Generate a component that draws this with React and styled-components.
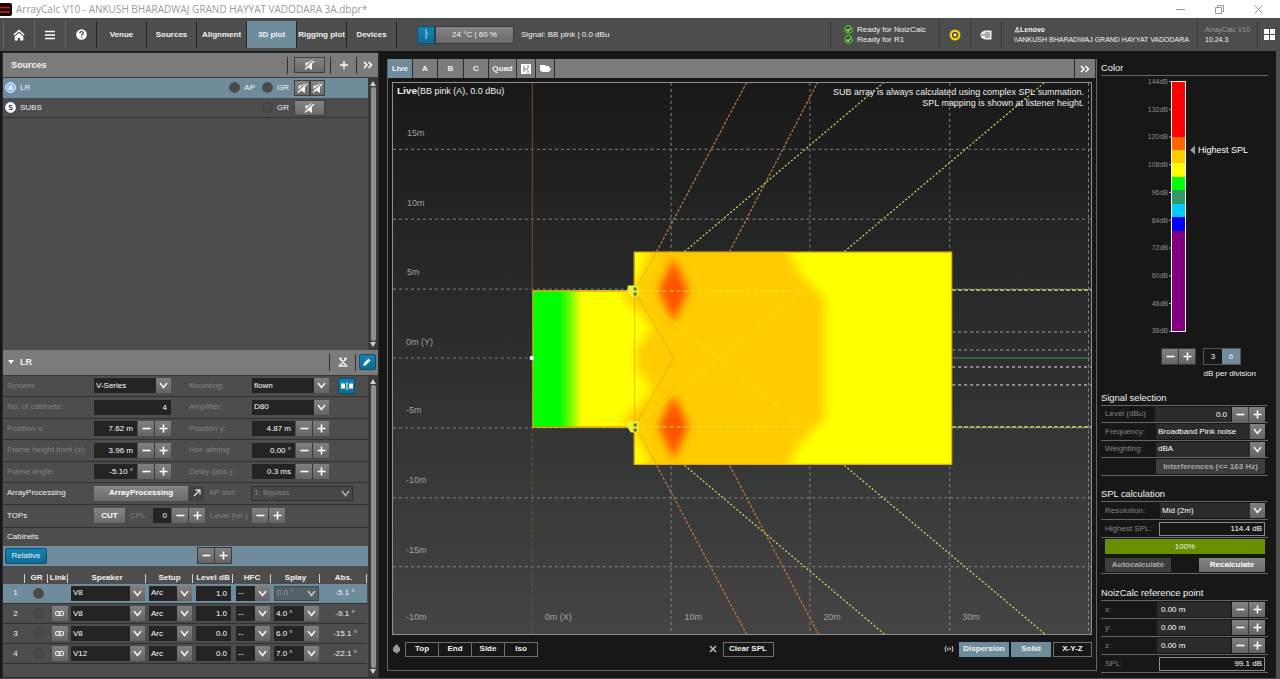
import React from "react";
import styled, { createGlobalStyle, css } from "styled-components";

const steel = "#6f8c9c";
const raised = "linear-gradient(#858585, #6a6a6a)";
const accent = "linear-gradient(#1183b4, #0f6c98)";

const GlobalStyle = createGlobalStyle`
  *, *::before, *::after { box-sizing: border-box; }
  html, body { margin: 0; background: #171717; }
  body, button, input, select, table {
    font-family: "Liberation Sans", Arial, sans-serif;
    font-size: 8px;
    line-height: 10px;
    color: #f2f2f2;
  }
  button, input, select { margin: 0; padding: 0; border: 0; border-radius: 0; }
  svg { display: block; flex: none; }
  h2, h3, p { margin: 0; font-weight: normal; }
`;

/* ---------- shell ---------- */
const Page = styled.div`
  display: flex;
  flex-direction: column;
  min-height: 100vh;
`;
const TitleBar = styled.header`
  display: flex;
  align-items: center;
  height: 18px;
  padding-right: 2px;
  background: #fff;
  color: #9a9a9a;
  font: 10px/16px "Open Sans", sans-serif;
`;
const TitleText = styled.span`
  flex: 1;
  padding-left: 4px;
  white-space: nowrap;
`;
const WindowButton = styled.button`
  display: grid;
  place-items: center;
  width: 39px;
  height: 16px;
  background: none;
`;
const Toolbar = styled.nav`
  display: flex;
  align-items: stretch;
  height: 33px;
  padding: 3px 0 3px 3px;
  background: #4d4d4d;
`;
const ToolIcon = styled.button`
  display: grid;
  place-items: center;
  width: 31px;
  background: none;
  border-left: 1px solid #696969;
`;
const NavButton = styled.button`
  width: 50px;
  border-left: 1px solid #242424;
  background: ${(p) => (p.$active ? steel : "none")};
  font-weight: bold;
  white-space: nowrap;
`;
const Climate = styled.div`
  display: flex;
  align-items: center;
  flex: 1;
  border-left: 1px solid #242424;
  padding-left: 20px;
`;
const ClimateIcon = styled.button`
  display: grid;
  place-items: center;
  width: 18px;
  height: 18px;
  background: ${accent};
  border: 1px solid #24485a;
`;
const ClimateButton = styled.button`
  width: 79px;
  height: 18px;
  margin-right: 7px;
  background: ${raised};
  border: 1px solid #383838;
`;
const StatusCell = styled.div`
  display: flex;
  flex-direction: column;
  justify-content: center;
  width: ${(p) => p.$w}px;
  padding-left: ${(p) => p.$pad || 0}px;
  border-left: 1px solid #383838;
  white-space: nowrap;
  ${(p) => p.$center && css`align-items: center;`}
  ${(p) => p.$tiny && css`font-size: 7px;`}
`;
const StatusLine = styled.span`
  display: flex;
  align-items: center;
  gap: 4px;
`;
const Dim = styled.span`color: #9a9a9a;`;
const Body = styled.main`
  display: flex;
  flex: 1;
  padding: 1px 4px 0 2px;
  background: #171717;
  border-right: 4px solid #505050;
  border-bottom: 1px solid #505050;
`;

/* ---------- shared controls ---------- */
const Field = styled.input`
  width: ${(p) => p.$w}px;
  height: 15px;
  min-width: 0;
  padding: 0 4px;
  background: #242424;
  color: #fff;
  text-align: ${(p) => (p.$left ? "left" : "right")};
  ${(p) => p.$outlined && css`
    height: 14px;
    background: #171717;
    border: 1px solid #8a8a8a;
    padding: 0 2px;
  `}
`;
const Square = styled.button`
  display: grid;
  place-items: center;
  width: 16px;
  height: 15px;
  background: linear-gradient(#808080, #646464);
`;
const Steps = styled.span`
  display: inline-flex;
  gap: 1px;
  padding: ${(p) => (p.$framed ? "1px" : 0)};
  background: #3a3a3a;
`;
const StepperBox = styled.span`
  display: flex;
  gap: 1px;
`;
const SelectBox = styled.span`
  position: relative;
  display: block;
  width: ${(p) => p.$w}px;
  opacity: ${(p) => (p.$off ? 0.6 : 1)};
  select {
    appearance: none;
    display: block;
    width: 100%;
    height: 15px;
    padding: 0 16px 0 2px;
    background: ${(p) => (p.$off ? "#444" : p.$soft ? "#2b2b2b" : "#242424")};
    border: ${(p) => (p.$off ? "1px solid #1c1c1c" : 0)};
    color: ${(p) => (p.$off ? "#aaa" : "#fff")};
    opacity: 1;
  }
`;
const Chevron = styled.span`
  position: absolute;
  top: 0;
  right: 0;
  display: grid;
  place-items: center;
  width: 15px;
  height: 15px;
  pointer-events: none;
  background: ${(p) => (p.$off ? "none" : "linear-gradient(#808080, #646464)")};
`;
const PushButton = styled.button`
  width: ${(p) => p.$w}px;
  height: ${(p) => p.$h || 15}px;
  background: ${(p) => (p.$flat ? "#3d3d3d" : raised)};
  color: ${(p) => (p.$flat ? "#a9a9a9" : "#fff")};
  font-weight: bold;
  white-space: nowrap;
`;
const BlueButton = styled.button`
  display: grid;
  place-items: center;
  width: ${(p) => p.$w}px;
  height: 16px;
  background: ${accent};
  border: 1px solid #124e6c;
  border-radius: 2px;
`;

const PlusMinus = ({ framed, label }) => (
  <Steps $framed={framed}>
    <Square aria-label={`Decrease ${label}`}>
      <svg width="9" height="9"><path d="M0.500 4.500h8" stroke="#fff" strokeWidth="1.600" /></svg>
    </Square>
    <Square aria-label={`Increase ${label}`}>
      <svg width="9" height="9"><path d="M0.500 4.500h8M4.500 0.500v8" stroke="#fff" strokeWidth="1.600" /></svg>
    </Square>
  </Steps>
);
const Stepper = ({ id, value, w = 43, label, left }) => (
  <StepperBox>
    <Field id={id} aria-label={label} $w={w} $left={left} defaultValue={value} />
    <PlusMinus label={label} />
  </StepperBox>
);
const Select = ({ id, value, w, off, label, soft }) => (
  <SelectBox $w={w} $off={off} $soft={soft}>
    <select id={id} aria-label={label} disabled={off} defaultValue={value}>
      <option>{value}</option>
    </select>
    <Chevron $off={off}>
      <svg width="9" height="7"><path d="M1 1l3.500 4.500L8 1" fill="none" stroke="#f4f4f4" strokeWidth="1.500" /></svg>
    </Chevron>
  </SelectBox>
);

/* ---------- left column ---------- */
const LeftPanel = styled.section`
  display: flex;
  flex-direction: column;
  flex: none;
  width: 377px;
  background: #4d4d4d;
  border: 1px solid #2a2a2a;
`;
const PanelHead = styled.div`
  display: flex;
  align-items: center;
  gap: 6px;
  height: ${(p) => p.$h}px;
  padding-left: ${(p) => p.$pad}px;
  background: #7b7b7b;
  border-bottom: 1px solid #3a3a3a;
  h2 { flex: 1; font-size: 9px; font-weight: bold; }
`;
const HeadTools = styled.span`display: flex;`;
const HeadTool = styled.span`
  display: grid;
  place-items: center;
  width: ${(p) => p.$w}px;
  height: 17px;
  border-left: 1px solid #2f2f2f;
`;
const BareButton = styled.button`
  display: grid;
  place-items: center;
  width: 16px;
  height: 16px;
  background: none;
`;
const MuteButton = styled.button`
  display: grid;
  place-items: center;
  width: ${(p) => p.$w}px;
  height: 16px;
  background: ${raised};
  border: 1px solid #404040;
`;
const Scrollable = styled.div`
  display: flex;
  flex: ${(p) => (p.$grow ? 1 : "none")};
`;
const ScrollContent = styled.div`
  flex: 1;
  min-width: 0;
  padding-bottom: ${(p) => p.$foot || 0}px;
`;
const ScrollTrack = styled.div`
  display: flex;
  flex-direction: column;
  align-items: center;
  gap: 1px;
  width: 10px;
  padding: 3px 0;
  background: #3c3c3c;
`;
const Thumb = styled.span`
  flex: 1;
  width: 5px;
  border-radius: 2px;
  background: #8f8f8f;
`;
const SourceRow = styled.div`
  display: flex;
  align-items: center;
  height: 20px;
  padding: 0 43px 0 2px;
  background: ${(p) => (p.$active ? steel : "#4d4d4d")};
  border-bottom: 1px solid ${(p) => (p.$active ? steel : "#333")};
`;
const SourceName = styled.span`
  flex: 1;
  padding-left: 4px;
`;
const Badge = styled.span`
  width: 11px;
  height: 11px;
  border-radius: 50%;
  background: ${(p) => (p.$blue ? "#8fc0ee" : "#fff")};
  color: ${(p) => (p.$blue ? "#fff" : "#333")};
  border: 1px solid #dce9f5;
  font-size: 7px;
  font-weight: bold;
  line-height: 9px;
  text-align: center;
`;
const Led = styled.i`
  display: inline-block;
  width: 11px;
  height: 11px;
  border-radius: 50%;
  border: 1px solid ${(p) => (p.$on ? "#4f4f4f" : "#404040")};
  background: ${(p) => (p.$on ? "#4a4a4a" : "#494949")};
`;
const Flag = styled.span`
  display: flex;
  align-items: center;
  gap: 4px;
  margin-right: ${(p) => p.$gap}px;
`;
const MutePair = styled.span`display: flex;`;
const Form = styled.div`
  display: grid;
  grid-template-rows: 21px 22px 21px 22px 21px 22px 23px 18px 20px;
`;
const FormRow = styled.div`
  display: grid;
  grid-template-columns: 87px 95px 63px 86px 17px;
  align-items: center;
  padding-left: 4px;
  border-bottom: 1px solid #303030;
  label { color: #838383; white-space: nowrap; }
`;
const FlexRow = styled(FormRow)`
  display: flex;
  ${(p) => p.$blue && css`
    background: ${steel};
    border-bottom: 0;
    padding-left: 2px;
  `}
  ${(p) => p.$plain && css`border-bottom: 0;`}
`;
const Cell = styled.span`
  flex: none;
  width: ${(p) => p.$w}px;
`;
const DimCell = styled(Cell)`color: #838383;`;
const ArrowButton = styled.button`
  display: grid;
  place-items: center;
  width: 15px;
  height: 15px;
  margin: 0 5px 0 1px;
  background: #424242;
`;
const Cabinets = styled.table`
  table-layout: fixed;
  width: 364px;
  border-collapse: collapse;
  th {
    height: 18px;
    padding: 6px 0 0;
    font-weight: bold;
    white-space: nowrap;
    background: linear-gradient(#cfcfcf, #cfcfcf) right bottom 1px / 1px 9px no-repeat;
  }
  td {
    height: 20px;
    padding: 0 0 0 3px;
    vertical-align: middle;
    border-bottom: 1px solid #303030;
  }
`;
const CabinetRow = styled.tr`
  background: ${(p) => (p.$active ? steel : "none")};
`;
const Centered = styled.td`
  text-align: center;
  ${Led}, ${Square} { display: block; margin: 0 auto; }
  ${Square} { display: grid; }
`;

/* ---------- plot ---------- */
const PlotPanel = styled.section`
  display: flex;
  flex-direction: column;
  flex: 1;
  min-width: 0;
  margin: 7px 4px 7px 8px;
  border: 1px solid #666;
  border-top: 0;
`;
const Tabs = styled.div`
  display: flex;
  height: 19px;
  background: #7b7b7b;
`;
const Tab = styled.button`
  display: grid;
  place-items: center;
  width: ${(p) => p.$w}px;
  background: ${(p) => (p.$active ? steel : "none")};
  border-right: 1px solid #2c2c2c;
  font-weight: bold;
`;
const TabFill = styled.span`
  flex: 1;
  border-right: 1px solid #2c2c2c;
`;
const PlotFrame = styled.div`
  flex: 1;
  margin: 4px 4px 0;
  border: 1px solid #8f8f8f;
  svg { width: 100%; height: 0; min-height: 100%; }
`;
const ViewBar = styled.div`
  display: flex;
  align-items: center;
  height: 35px;
  padding: 0 4px 7px;
`;
const ViewButton = styled.button`
  width: ${(p) => p.$w}px;
  height: 15px;
  margin-left: ${(p) => p.$gap ?? 0}px;
  background: ${(p) => (p.$active ? steel : "#171717")};
  border: 1px solid ${(p) => (p.$active ? steel : "#6e6e6e")};
  font-weight: bold;
  white-space: nowrap;
`;
const ViewGroup = styled.span`
  display: flex;
  margin: 0 auto 0 4px;
  ${ViewButton} + ${ViewButton} { border-left: 0; }
`;
const ClearGroup = styled.span`
  display: flex;
  align-items: center;
  gap: 6px;
  margin-right: auto;
`;

/* ---------- right column ---------- */
const RightPanel = styled.aside`
  flex: none;
  width: 171px;
  padding: 11px 4px 0 0;
`;
const Heading = styled.h3`
  height: 13px;
  border-bottom: 1px solid #666;
  white-space: nowrap;
`;
const ColorScale = styled.div`
  svg { width: 100%; height: 265px; }
`;
const ScaleControls = styled.div`
  display: flex;
  justify-content: flex-end;
  gap: 7px;
  margin: 7px 27px 0 0;
`;
const Division = styled.span`
  display: flex;
  border: 1px solid #555;
`;
const DivisionButton = styled.button`
  width: 18px;
  background: ${(p) => (p.$active ? steel : "#171717")};
`;
const Caption = styled.p`
  padding: 4px 12px 0 0;
  text-align: right;
`;
const Group = styled.section`
  margin-top: ${(p) => p.$gap}px;
`;
const Rows = styled.div`
  display: grid;
  grid-auto-rows: ${(p) => p.$rows || "18px"};
`;
const Row = styled.div`
  display: flex;
  align-items: center;
  justify-content: space-between;
  padding: 0 3px 0 4px;
  border-bottom: 1px solid #666;
  label { color: #858585; white-space: nowrap; }
  ${Field} { background: ${(p) => (p.$outlined ? "#171717" : "#2b2b2b")}; }
`;
const Progress = styled.div`
  height: 15px;
  margin: 1px 3px 2px 4px;
  background: #678f00;
  line-height: 15px;
  text-align: center;
`;

/* ---------- icons ---------- */
const MuteIcon = () => (
  <svg width="11" height="10" viewBox="0 0 11 10">
    <path d="M1.500 2.500H4L8 0v10L4 7.500H1.500z" fill="#f2f2f2" />
    <path d="M0 8.500L9.500 0" stroke="#757575" strokeWidth="1.200" />
    <path d="M1 9.500L10 1" stroke="#f2f2f2" strokeWidth="1.400" />
  </svg>
);
const DoubleChevron = () => (
  <svg width="10" height="8"><path d="M1 1l3 3-3 3M5.500 1l3 3-3 3" fill="none" stroke="#fff" strokeWidth="1.500" /></svg>
);
const Triangle = ({ up }) => (
  <svg width="6" height="5"><path d={up ? "M3 0L6 5H0z" : "M0 0h6L3 5z"} fill="#d0d0d0" /></svg>
);
const CheckIcon = () => (
  <svg width="9" height="9" viewBox="0 0 9 9">
    <circle cx="4.500" cy="4.500" r="3.700" fill="#245b14" stroke="#55b436" strokeWidth="1.400" />
    <path d="M2.500 4.500l1.600 1.600 2.600-3" fill="none" stroke="#c8f0b8" strokeWidth="1.100" />
  </svg>
);
const LinkIcon = () => (
  <svg width="9" height="7" viewBox="0 0 9 7" fill="none" stroke="#eee" strokeWidth="1.200">
    <rect x="0.600" y="1.500" width="4.400" height="4" rx="1.500" />
    <rect x="4" y="1.500" width="4.400" height="4" rx="1.500" />
  </svg>
);
const Scroller = () => (
  <ScrollTrack aria-hidden="true"><Triangle up /><Thumb /><Triangle /></ScrollTrack>
);

/* ---------- data ---------- */
const NAV = ["Venue", "Sources", "Alignment", "3D plot", "Rigging plot", "Devices"];
const TABS = [["Live", 25], ["A", 25], ["B", 26], ["C", 25], ["Quad", 28]];
const CABINETS = [
  [1, "V8", "1.0", "0.0 °", "-5.1 °"],
  [2, "V8", "1.0", "4.0 °", "-9.1 °"],
  [3, "V8", "0.0", "6.0 °", "-15.1 °"],
  [4, "V12", "0.0", "7.0 °", "-22.1 °"],
];
const COLUMNS = [["", 22], ["GR", 23], ["Link", 20], ["Speaker", 78], ["Setup", 47], ["Level dB", 40], ["HFC", 38], ["Splay", 49], ["Abs.", 47]];
const SCALE = [
  [0, 56, "#ff0000"], [56, 13, "#ff6600"], [69, 13, "#ffcc00"], [82, 14, "#ffff00"],
  [96, 13, "#00ff00"], [109, 14, "#339966"], [123, 13, "#00ccff"], [136, 14, "#0000ff"], [150, 100, "#800080"],
];
const LEVELS = [144, 132, 120, 108, 96, 84, 72, 60, 48, 36];

const Plot = () => (
  <svg viewBox="0 0 699 552" preserveAspectRatio="xMidYMid slice" role="img" aria-label="SPL map, top view">
    <defs>
      <linearGradient id="bg" x2="0" y2="1">
        <stop offset="0" stopColor="#191919" />
        <stop offset="0.4" stopColor="#292b2b" />
        <stop offset="1" stopColor="#444" />
      </linearGradient>
      <linearGradient id="stage">
        <stop offset="0.260" stopColor="#0f0" />
        <stop offset="0.340" stopColor="#50ff00" />
        <stop offset="0.480" stopColor="#ff0" />
      </linearGradient>
      <filter id="soft" x="-40%" y="-40%" width="180%" height="180%"><feGaussianBlur stdDeviation="5" /></filter>
      <filter id="hot" x="-60%" y="-40%" width="220%" height="180%"><feGaussianBlur stdDeviation="4" /></filter>
      <clipPath id="area"><path d="M140 208h102v-39h318v213H242v-38H140z" /></clipPath>
    </defs>
    <rect width="699" height="552" fill="url(#bg)" />
    <g stroke="#858585" strokeWidth="1" strokeDasharray="3 3">
      {[66.5, 136.5, 206.5, 345.5, 415.5, 484.5].map((y) => <path key={y} d={`M0 ${y}H699`} />)}
      {[278.5, 417.5, 557.5, 696.5].map((x) => <path key={x} d={`M${x} 0V552`} />)}
      <path d="M0 275.500H140" stroke="#6c7f6c" />
      <path d="M560 249.500H699M560 267.500H699" stroke="#a0a0a0" />
      <path d="M560 284.500H699M560 302.500H699" stroke="#e8e8e8" />
    </g>
    <path d="M560 275.500H699" stroke="#3f7048" strokeWidth="1.500" />
    <path d="M139.500 0V208" stroke="#8a4430" />
    <path d="M139.500 345V552" stroke="#7a5a30" strokeDasharray="3 3" />
    <g clipPath="url(#area)">
      <rect x="140" y="169" width="420" height="213" fill="#ff0" />
      <rect x="140" y="169" width="102" height="213" fill="url(#stage)" />
      <path d="M262 150H386L408 192 432 216V336L408 360 386 400H262L250 366 242 350 228 338 248 322 260 306 244 286V266L260 246 248 230 228 213 242 202 250 186z" fill="#ffcc00" filter="url(#soft)" />
      <g fill="#ff5200" filter="url(#hot)">
        <path d="M281 175L296 208L281 240L266 208z" />
        <path d="M281 312L296 344L281 377L266 344z" />
      </g>
      <path d="M242 208L410 344M242 344L410 208" fill="none" stroke="#ffe010" />
      <path d="M242 208.500H410M242 344.500H410" stroke="#ffe84a" strokeDasharray="4 3" />
      <path d="M242 208L281 276L242 344V208L264 169M242 344L264 382" fill="none" stroke="#c78f10" strokeOpacity="0.500" />
    </g>
    <path d="M140 208.500H241.500V169.500H559.500V382H241.500V345H140V208" fill="none" stroke="#e8a51c" strokeWidth="1.200" />
    <path d="M560 207.500H699M560 344.500H699" stroke="#d8d87c" strokeWidth="1.500" strokeDasharray="4 2" />
    <g fill="none" strokeWidth="1.200" strokeDasharray="3 1.500">
      <path d="M264 169L354 0M337 169L425 0M264 383L354 552M337 383L426 552" stroke="#c2763c" />
      <path d="M292 169L491 0M452 169L652 0M292 383L492 552M452 383L653 552" stroke="#dddd64" strokeDasharray="2 2" />
    </g>
    <g fill="#e8f23a">
      <path d="M235 203h11v11h-8l-3-5zM235 339h11v11h-8l-3-5z" />
      <path d="M241 205h3v3h-3zM241 210h3v3h-3zM241 341h3v3h-3zM241 346h3v3h-3z" fill="#697015" />
    </g>
    <circle cx="139" cy="275.500" r="2.200" fill="#e4f2ff" />
    <g fill="#a2a2a2" fontSize="9">
      <text x="14" y="53">15m</text><text x="14" y="123">10m</text><text x="14" y="192">5m</text>
      <text x="13" y="262">0m (Y)</text><text x="13" y="331">-5m</text><text x="13" y="401">-10m</text>
      <text x="13" y="471">-15m</text><text x="13" y="538">-10m</text><text x="152" y="538">0m (X)</text>
      <text x="292" y="538">10m</text><text x="431" y="538">20m</text><text x="570" y="538">30m</text>
    </g>
    <g fill="#f0f0f0" fontSize="9">
      <text x="4" y="11" fontSize="10" fontWeight="bold">Live</text>
      <text x="24" y="11">(BB pink (A), 0.0 dBu)</text>
      <text x="692" y="12" textAnchor="end">SUB array is always calculated using complex SPL summation.</text>
      <text x="692" y="23" textAnchor="end">SPL mapping is shown at listener height.</text>
    </g>
  </svg>
);

const Pair = ({ id, label, children }) => (
  <>
    <label htmlFor={id}>{label}</label>
    {children}
  </>
);

export default function App() {
  return (
    <Page>
      <GlobalStyle />
      <TitleBar>
        <svg width="12" height="13" viewBox="0 0 12 13">
          <path d="M0 0h10q2 0 2 2v9q0 2-2 2H0z" fill="#180808" />
          <path d="M0 4.500h10M0 9h10" stroke="#c32222" strokeWidth="1.500" />
        </svg>
        <TitleText>ArrayCalc V10 - ANKUSH BHARADWAJ GRAND HAYYAT VADODARA 3A.dbpr*</TitleText>
        <WindowButton aria-label="Minimize"><svg width="9" height="9"><path d="M0 4.500h9" stroke="#999" /></svg></WindowButton>
        <WindowButton aria-label="Restore"><svg width="9" height="9"><path d="M.5 2.500h6v6h-6zM2.500 2.500v-2h6v6h-2" fill="none" stroke="#999" /></svg></WindowButton>
        <WindowButton aria-label="Close"><svg width="9" height="9"><path d="M.5 .5l8 8M8.500 .5l-8 8" stroke="#999" /></svg></WindowButton>
      </TitleBar>

      <Toolbar>
        <ToolIcon aria-label="Home">
          <svg width="12" height="12" viewBox="0 0 12 12">
            <path d="M.8 6L6 1.500 11.200 6" fill="none" stroke="#fff" strokeWidth="1.600" />
            <path d="M6 4l4.300 3.600V11.500H7.200V9H4.800v2.500H1.700V7.600z" fill="#fff" />
          </svg>
        </ToolIcon>
        <ToolIcon aria-label="Menu"><svg width="10" height="10"><path d="M0 1.500h10M0 5h10M0 8.500h10" stroke="#fff" strokeWidth="1.300" /></svg></ToolIcon>
        <ToolIcon aria-label="Help">
          <svg width="11" height="11" viewBox="0 0 11 11">
            <circle cx="5.500" cy="5.500" r="5.300" fill="#fff" />
            <path d="M3.800 4.300q0-1.700 1.800-1.700t1.700 1.500q0 .9-1 1.300-.7.300-.7 1.100" fill="none" stroke="#444" strokeWidth="1.300" />
            <path d="M5 7.600h1.200v1.200H5z" fill="#444" />
          </svg>
        </ToolIcon>
        {NAV.map((n) => <NavButton key={n} $active={n === "3D plot"}>{n}</NavButton>)}
        <Climate>
          <ClimateIcon aria-label="Temperature"><svg width="6" height="11"><path d="M2 1h2M3 1v8M2 9h2M4 4h1M4 6h1" stroke="#8fd3f0" /></svg></ClimateIcon>
          <ClimateButton>24 °C | 60 %</ClimateButton>
          <span>Signal: BB pink | 0.0 dBu</span>
        </Climate>
        <StatusCell $w={109} $pad={13}>
          <StatusLine><CheckIcon />Ready for NoizCalc</StatusLine>
          <StatusLine><CheckIcon />Ready for R1</StatusLine>
        </StatusCell>
        <StatusCell $w={31} $center>
          <svg width="12" height="12"><circle cx="6" cy="6" r="5.500" fill="#efcf16" /><circle cx="6" cy="6" r="3" fill="#3a3200" /><path d="M4.500 4.500h3v3h-3z" fill="#fff4b0" /></svg>
        </StatusCell>
        <StatusCell $w={31} $center>
          <svg width="12" height="10" viewBox="0 0 12 10"><path d="M5 0.500h6.500v9H5Q0.500 8.500 0.500 5T5 0.500z" fill="#f0f0f0" /><path d="M1.500 5h3.500M5 3h5M5 5h5M5 7h5" stroke="#555" strokeWidth=".9" /></svg>
        </StatusCell>
        <StatusCell $w={196} $pad={12} $tiny>
          <b>♙Lenovo</b>
          <span>\\ANKUSH BHARADWAJ GRAND HAYYAT VADODARA</span>
        </StatusCell>
        <StatusCell $w={60} $pad={7} $tiny>
          <Dim>ArrayCalc V10</Dim>
          <span>10.24.3</span>
        </StatusCell>
        <StatusCell $w={23} $center>
          <svg width="11" height="11"><path d="M0 0h5v5H0zM6 0h5v5H6zM0 6h5v5H0zM6 6h5v5H6z" fill="#fff" /></svg>
        </StatusCell>
      </Toolbar>

      <Body>
        <LeftPanel>
          <PanelHead $h={25} $pad={8}>
            <h2>Sources</h2>
            <HeadTools>
              <HeadTool $w={43}><MuteButton $w={31} aria-label="Mute all"><MuteIcon /></MuteButton></HeadTool>
              <HeadTool $w={26}><BareButton aria-label="Add source"><svg width="8" height="8"><path d="M0 4h8M4 0v8" stroke="#fff" strokeWidth="1.400" /></svg></BareButton></HeadTool>
              <HeadTool $w={22}><BareButton aria-label="Expand"><DoubleChevron /></BareButton></HeadTool>
            </HeadTools>
          </PanelHead>
          <Scrollable $grow>
            <ScrollContent>
              <SourceRow $active>
                <Badge $blue>A</Badge><SourceName>LR</SourceName>
                <Flag $gap={7}><Led $on />AP</Flag>
                <Flag $gap={5}><Led $on />GR</Flag>
                <MutePair><MuteButton $w={16} aria-label="Mute left"><MuteIcon /></MuteButton><MuteButton $w={15} aria-label="Mute right"><MuteIcon /></MuteButton></MutePair>
              </SourceRow>
              <SourceRow>
                <Badge>S</Badge><SourceName>SUBS</SourceName>
                <Flag $gap={5}><Led />GR</Flag>
                <MuteButton $w={31} aria-label="Mute SUBS"><MuteIcon /></MuteButton>
              </SourceRow>
            </ScrollContent>
            <Scroller />
          </Scrollable>

          <PanelHead $h={26} $pad={5}>
            <svg width="6" height="4"><path d="M0 0h6L3 4z" fill="#fff" /></svg>
            <h2>LR</h2>
            <HeadTools>
              <HeadTool $w={26}><BareButton aria-label="Delete"><svg width="10" height="10"><path d="M1 1.500h3M6 1.500h3M0.500 9h9M2 2l6 6M8 2L2 8" stroke="#eee" strokeWidth="1.500" /></svg></BareButton></HeadTool>
              <HeadTool $w={23}><BlueButton $w={17} aria-label="Edit"><svg width="10" height="10"><path d="M1 9l1-3 4.500-4.500 2 2L4 8z" fill="#fff" /></svg></BlueButton></HeadTool>
            </HeadTools>
          </PanelHead>
          <Scrollable>
            <ScrollContent $foot={13}>
              <Form>
                <FormRow>
                  <Pair id="sys" label="System:"><Select id="sys" value="V-Series" w={77} /></Pair>
                  <Pair id="mount" label="Mounting:"><Select id="mount" value="flown" w={77} /></Pair>
                  <BlueButton $w={17} aria-label="Symmetric"><svg width="12" height="8"><path d="M0 1.500h4v5H0zM8 1.500h4v5H8zM5.500 0h1v8h-1z" fill="#fff" /></svg></BlueButton>
                </FormRow>
                <FormRow>
                  <Pair id="cabs" label="No. of cabinets:"><Field id="cabs" $w={77} defaultValue="4" /></Pair>
                  <Pair id="amp" label="Amplifier:"><Select id="amp" value="D80" w={77} /></Pair>
                </FormRow>
                <FormRow>
                  <Pair id="px" label="Position x:"><Stepper id="px" label="Position x" value="7.62 m" /></Pair>
                  <Pair id="py" label="Position y:"><Stepper id="py" label="Position y" value="4.87 m" /></Pair>
                </FormRow>
                <FormRow>
                  <Pair id="fh" label="Frame height front (z):"><Stepper id="fh" label="Frame height" value="3.96 m" /></Pair>
                  <Pair id="ha" label="Hor. aiming:"><Stepper id="ha" label="Horizontal aiming" value="0.00 °" /></Pair>
                </FormRow>
                <FormRow>
                  <Pair id="fa" label="Frame angle:"><Stepper id="fa" label="Frame angle" value="-5.10 °" /></Pair>
                  <Pair id="dl" label="Delay (abs.):"><Stepper id="dl" label="Delay" value="0.3 ms" /></Pair>
                </FormRow>
                <FlexRow>
                  <Cell $w={87}>ArrayProcessing</Cell>
                  <PushButton $w={94}>ArrayProcessing</PushButton>
                  <ArrowButton aria-label="Open ArrayProcessing"><svg width="8" height="8"><path d="M1 7l5.500-5.500M2.500 1H7v4.500" fill="none" stroke="#ddd" strokeWidth="1.300" /></svg></ArrowButton>
                  <DimCell $w={42}>AP slot:</DimCell>
                  <Select label="AP slot" value="1: Bypass" w={102} off />
                </FlexRow>
                <FlexRow>
                  <Cell $w={87}>TOPs</Cell>
                  <PushButton $w={31}>CUT</PushButton>
                  <DimCell $w={5} />
                  <DimCell $w={23}>CPL:</DimCell>
                  <Stepper label="CPL" value="0" w={18} />
                  <DimCell $w={5} />
                  <DimCell $w={42}>Level (rel.)</DimCell>
                  <PlusMinus label="relative level" />
                </FlexRow>
                <FlexRow $plain>Cabinets</FlexRow>
                <FlexRow $blue>
                  <BlueButton $w={42}>Relative</BlueButton>
                  <Cell $w={150} />
                  <PlusMinus framed label="cabinet level" />
                </FlexRow>
              </Form>
              <Cabinets>
                <colgroup>{COLUMNS.map(([n, w]) => <col key={n} width={w} />)}</colgroup>
                <thead><tr>{COLUMNS.map(([n]) => <th key={n}>{n}</th>)}</tr></thead>
                <tbody>
                  {CABINETS.map(([n, speaker, level, splay, abs]) => (
                    <CabinetRow key={n} $active={n === 1}>
                      <Centered>{n}</Centered>
                      <Centered><Led $on={n === 1} /></Centered>
                      <Centered>{n > 1 && <Square aria-label={`Link cabinet ${n}`}><LinkIcon /></Square>}</Centered>
                      <td><Select label="Speaker" value={speaker} w={74} /></td>
                      <td><Select label="Setup" value="Arc" w={43} /></td>
                      <td><Field aria-label="Level dB" $w={35} defaultValue={level} /></td>
                      <td><Select label="HFC" value="--" w={34} /></td>
                      <td><Select label="Splay" value={splay} w={45} off={n === 1} /></td>
                      <Centered>{abs}</Centered>
                    </CabinetRow>
                  ))}
                </tbody>
              </Cabinets>
            </ScrollContent>
            <Scroller />
          </Scrollable>
        </LeftPanel>

        <PlotPanel>
          <Tabs>
            {TABS.map(([n, w]) => <Tab key={n} $w={w} $active={n === "Live"}>{n}</Tab>)}
            <Tab $w={19} aria-label="Save plot">
              <svg width="10" height="10"><path d="M0 0h10v10H0z" fill="#fff" /><path d="M3 2v6M3 5h2M7 1v3M7 6v3M5 5h2" stroke="#777" /></svg>
            </Tab>
            <Tab $w={19} aria-label="Open plot">
              <svg width="11" height="8"><path d="M0 0h5l1 1h3v1l2 2-2 3H2L0 5z" fill="#fff" /></svg>
            </Tab>
            <TabFill />
            <Tab $w={21} aria-label="Expand"><DoubleChevron /></Tab>
          </Tabs>
          <PlotFrame><Plot /></PlotFrame>
          <ViewBar>
            <svg width="9" height="10"><path d="M4.500 0L8 4v3L4.500 9.500 1 7V4z" fill="#9a9a9a" /></svg>
            <ViewGroup>
              <ViewButton $w={34}>Top</ViewButton><ViewButton $w={33}>End</ViewButton>
              <ViewButton $w={33}>Side</ViewButton><ViewButton $w={33}>Iso</ViewButton>
            </ViewGroup>
            <ClearGroup>
              <svg width="8" height="8"><path d="M1 1l6 6M7 1L1 7" stroke="#bbb" strokeWidth="1.500" /></svg>
              <ViewButton $w={51}>Clear SPL</ViewButton>
            </ClearGroup>
            <svg width="10" height="8"><path d="M2 1Q0 4 2 7M8 1q2 3 0 6M4 2.500Q3 4 4 5.500M6 2.500Q7 4 6 5.500M4.500 4h1" fill="none" stroke="#ccc" /></svg>
            <ViewButton $w={50} $gap={5} $active>Dispersion</ViewButton>
            <ViewButton $w={40} $gap={2} $active>Solid</ViewButton>
            <ViewButton $w={39} $gap={2}>X-Y-Z</ViewButton>
          </ViewBar>
        </PlotPanel>

        <RightPanel>
          <Heading>Color</Heading>
          <ColorScale>
            <svg viewBox="0 0 167 265" preserveAspectRatio="xMinYMin meet" role="img" aria-label="SPL colour scale">
              {SCALE.map(([y, h, c]) => <rect key={c} x="71" y={y + 5} width="13" height={h} fill={c} />)}
              <path d="M70.500 5.500h14v250h-14z" fill="none" stroke="#fff" />
              <g fill="#8e8e8e" fontSize="7" textAnchor="end">
                {LEVELS.map((l, i) => <text key={l} x="67" y={8 + i * 27.7}>{l}dB</text>)}
              </g>
              {LEVELS.map((l, i) => <path key={l} d={`M68 ${5.5 + i * 27.75}h2`} stroke="#aaa" />)}
              <path d="M94 69.500v9l-5-4.500z" fill="#999" />
              <text x="97" y="77" fill="#fff" fontSize="9">Highest SPL</text>
            </svg>
          </ColorScale>
          <ScaleControls>
            <PlusMinus framed label="scale" />
            <Division><DivisionButton>3</DivisionButton><DivisionButton $active>6</DivisionButton></Division>
          </ScaleControls>
          <Caption>dB per division</Caption>

          <Group $gap={14}>
            <Heading>Signal selection</Heading>
            <Rows $rows="17px 18px">
              <Row><Pair id="lv" label="Level (dBu)"><Stepper id="lv" label="Level" value="0.0" w={76} /></Pair></Row>
              <Row><Pair id="fr" label="Frequency:"><Select id="fr" value="Broadband Pink noise" w={109} soft /></Pair></Row>
              <Row><Pair id="wt" label="Weighting:"><Select id="wt" value="dBA" w={109} soft /></Pair></Row>
              <Row><span /><PushButton $w={109} $flat>Interferences (&lt;= 163 Hz)</PushButton></Row>
            </Rows>
          </Group>
          <Group $gap={13}>
            <Heading>SPL calculation</Heading>
            <Rows>
              <Row><Pair id="rs" label="Resolution:"><Select id="rs" value="Mid (2m)" w={105} soft /></Pair></Row>
              <Row $outlined><Pair id="hs" label="Highest SPL:"><Field id="hs" $w={106} $outlined readOnly value="114.4 dB" /></Pair></Row>
              <Progress role="progressbar" aria-valuenow={100}>100%</Progress>
              <Row><PushButton $w={66} $h={14} $flat>Autocalculate</PushButton><PushButton $w={66} $h={14}>Recalculate</PushButton></Row>
            </Rows>
          </Group>
          <Group $gap={14}>
            <Heading>NoizCalc reference point</Heading>
            <Rows>
              {["x", "y", "z"].map((a) => (
                <Row key={a}><Pair id={`ref-${a}`} label={`${a}:`}><Stepper id={`ref-${a}`} label={`Reference ${a}`} value="0.00 m" w={74} left /></Pair></Row>
              ))}
              <Row $outlined><Pair id="spl" label="SPL:"><Field id="spl" $w={106} $outlined readOnly value="99.1 dB" /></Pair></Row>
            </Rows>
          </Group>
        </RightPanel>
      </Body>
    </Page>
  );
}
